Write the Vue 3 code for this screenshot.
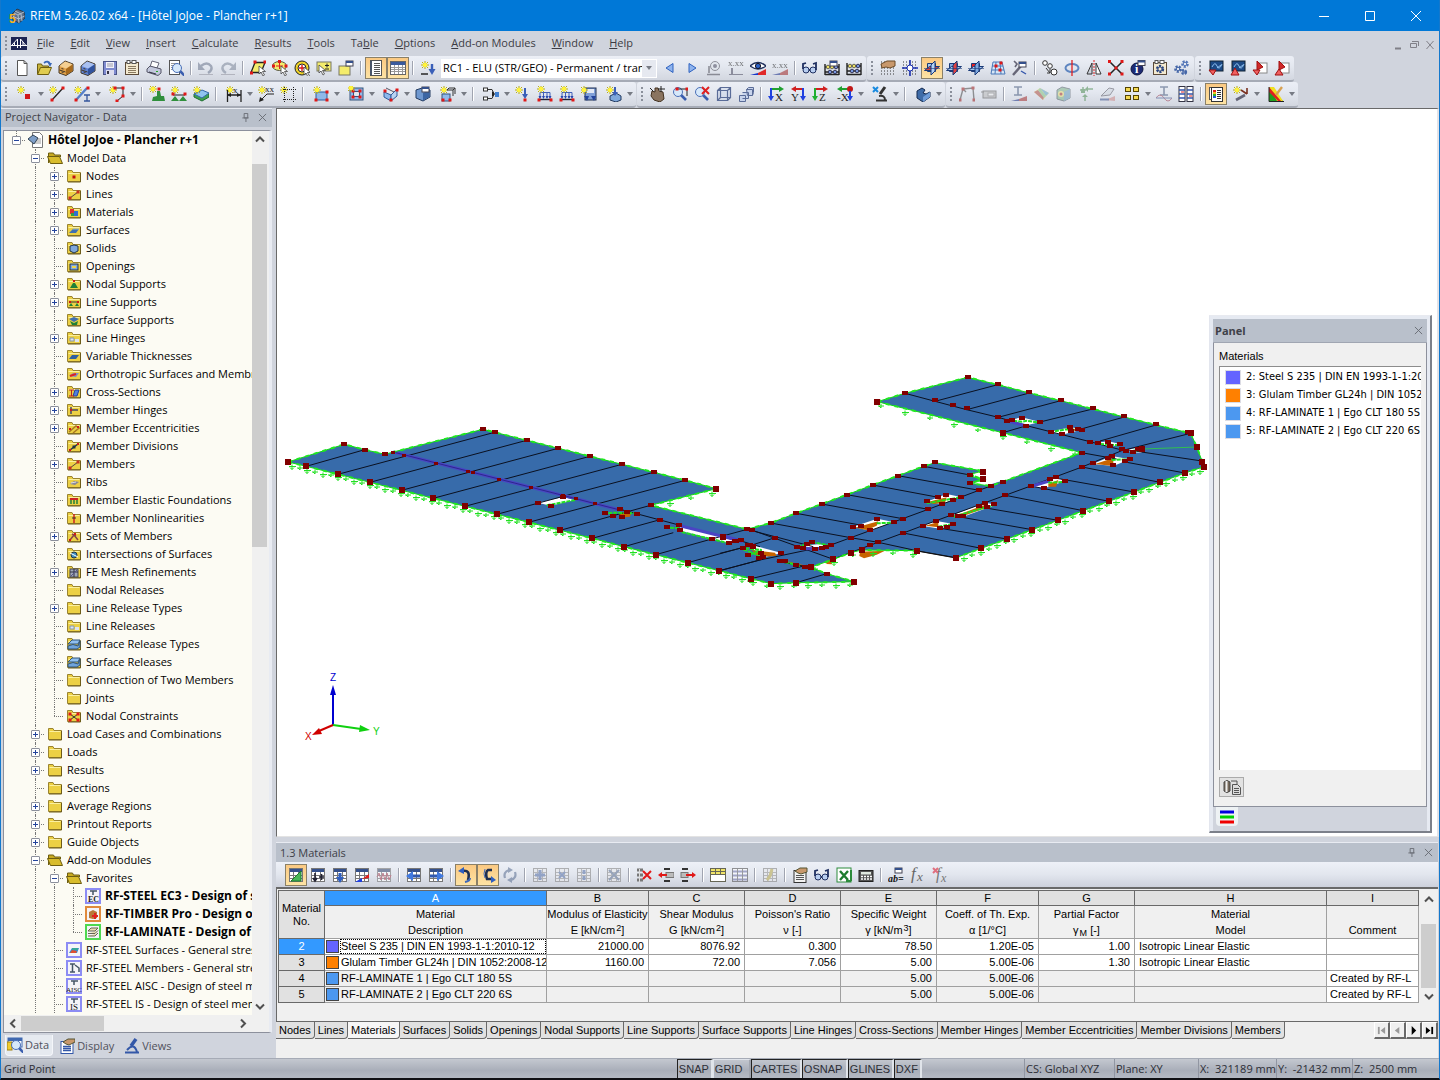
<script setup>
import { ref } from 'vue'

/* ---------- drawing helpers for 16x16 icons ---------- */
const P = (d, s = '#333', f = 'none', w = 1) => `<path d="${d}" stroke="${s}" fill="${f}" stroke-width="${w}"/>`
const F = (d, f) => `<path d="${d}" fill="${f}"/>`
const R = (x, y, w, h, f, s = 'none') => `<rect x="${x}" y="${y}" width="${w}" height="${h}" fill="${f}" stroke="${s}"/>`
const C = (x, y, r, f, s = 'none') => `<circle cx="${x}" cy="${y}" r="${r}" fill="${f}" stroke="${s}"/>`
const T = (x, y, t, size = 9, f = '#222', extra = '') => `<text x="${x}" y="${y}" font-family="Liberation Serif,serif" font-size="${size}" fill="${f}" ${extra}>${t}</text>`
const dot = (x, y, f = '#e01818') => R(x - 1.5, y - 1.5, 3, 3, f)
const star = (x, y) => P(`M${x - 4} ${y}h8M${x} ${y - 4}v8M${x - 3} ${y - 3}l6 6M${x + 3} ${y - 3}l-6 6`, '#b9ae12') + C(x, y, 2.3, '#fff33c')
const cursor = (x, y) => P(`M${x} ${y}v8l2-2 2 4 1.500-1-2-3.500h3z`, '#444', '#fff', 0.8)
const sheet = (x, y, w, h) => R(x, y, w, h, '#fff', '#555')
const grid = (s = '#777') => R(1.5, 1.5, 13, 13, '#fff', s) + R(2, 2, 12, 3, '#34508c') + P('M2 8.500h12M2 11.500h12M5.500 5v9M10.500 5v9', s)
const pale = () => R(1.5, 1.5, 13, 13, '#e8eaf0', '#888') + P('M2 5.500h12M2 8.500h12M2 11.500h12M5.500 2v12M10.500 2v12', '#999')
const lens = (x, y) => P(`M${x + 3} ${y + 3}l5 5`, '#3a5dae', 'none', 2.6) + C(x, y, 4.5, '#d6e8fa', '#4a6fb8')
const box = (a, b, c) => P('M1 6l6-5 8 3v7l-7 4.500-7-2.500z', '#443828', a) + F('M8 9l6.500-4.500v6.500L8 15z', c) + F('M1.500 6L7 1.500l7.500 2.700L8 8.500z', b) + P('M1.500 10l6 2M3.500 8.500l2 .500M3.500 12l2 .500', '#443828')
const axes = (h, v, t, hd) => P(hd > 0 ? 'M3 3h9' : 'M14 3H5', h, 'none', 2) + F(hd > 0 ? 'M11 0l5 3-5 3z' : 'M6 0L1 3l5 3z', h) + P(hd > 0 ? 'M3 2v9' : 'M13 2v9', v, 'none', 2) + F(hd > 0 ? 'M0 10h6l-3 5z' : 'M10 10h6l-3 5z', v) + T(hd > 0 ? 7 : 1, 15, t, 11)
const cross = (x, y, s, c) => P(`M${x} ${y}l${s} ${s}M${x + s} ${y}l-${s} ${s}`, c, 'none', 2)
const abacus = (y) => P(`M1 ${y}v${15 - y}M15 ${y}v${15 - y}M1 ${y + 3}h14M1 ${y + 8}h14M1 14.500h14`, '#222', 'none', 1.4) + C(4, y + 3, 1.8, '#efe060', '#665') + C(8, y + 3, 1.8, '#efe060', '#665') + C(12, y + 3, 1.8, '#7898e0', '#335') + C(6, y + 8, 1.8, '#7898e0', '#335') + C(11, y + 8, 1.8, '#7898e0', '#335')
const plane = (a, b, c) => P('M3.500 3.500h8v8h-8z', '#1a3a78', b) + P('M.500 10.500l5-4h10l-5 4z', '#1a3a78', a) + P('M7 15V5l4-4v10z', '#1a3a78', c) + P('M0 8.500h16', '#1b3a7a', 'none', 0.6)
const gear = (x, y, r, f) => `<circle cx="${x}" cy="${y}" r="${r}" fill="none" stroke="${f}" stroke-width="2.400" stroke-dasharray="2 1.200"/>` + C(x, y, r - 0.8, 'none', f)
const eye = (y) => P(`M0 ${y}q8-7 16 0q-8 6-16 0z`, '#20305c', '#fff', 1.4) + C(8, y, 2.6, '#2c62c8', '#112')
const winlet = (x, y) => R(x, y, 7, 5, '#fff', '#445') + R(x, y, 7, 2, '#34508c')
const load = P('M1 13.500h14', '#223', 'none', 1.4) + P('M3 12V6.500h10V12M6.500 12V6.500M10 12V6.500', '#4060b8') + F('M1.500 10h3l-1.500 3zM5 10h3l-1.500 3zM8.500 10h3l-1.500 3zM11.500 10h3l-1.500 3z', '#2848b0') + dot(2, 14) + dot(14, 14)
const dots = '<path d="M1 2h15M1 5h15M1 8h15M1 11h15M1 14h15" stroke="#333" stroke-width="1" stroke-dasharray="1 2"/>'
const rfx = (a) => R(2, 1, 13, 10, '#1c4a86', '#123') + P('M4 7q3-6 5-1t5-2M9 8l4-3', '#8fc0f0') + P(a, '#a01010', '#f06060')

const icons = {
  new: P('M3.500.500h6.500l3 3v12h-9.500z', '#555', '#fff') + P('M10 .500v3h3', '#555'),
  open: P('M1.500 14V4h4l1 2h6v2', '#6d5d10', '#c8b43c') + P('M1.500 14.500l3-7h11l-3 7z', '#6d5d10', '#e0cc50') + P('M8 3q4-3 6 1', '#3a68b8', 'none', 1.8) + F('M12 3h4l-2 4z', '#3a68b8'),
  boxBrown: box('#e2a24a', '#f4cf92', '#a86a1c'),
  boxBlue: box('#5f82d2', '#a9c0f0', '#31539e'),
  save: R(1.5, 1.5, 13, 13, '#7f8bd0', '#4b5488') + R(4, 2, 8, 6, '#f2f2fa') + P('M5 4h6M5 6h6', '#99a') + R(4, 10, 8, 5, '#dde') + R(5, 11, 2, 3, '#334'),
  report: R(1.5, 2.5, 13, 12, '#f4ead0', '#5b4a38') + R(3, 0.5, 3, 3, '#fff', '#555') + R(8, 0.5, 4, 3, '#fff', '#555') + P('M4 6.500h8M4 8.500h8M4 10.500h8M4 12.500h8', '#8a7a60'),
  print: P('M4 7l2-6 7 2-2 5z', '#667', '#fff') + P('M1 9l3-3 11 3v4l-3 2.500L1 12z', '#556', '#c3c8dc') + P('M3 12l7 2', '#334') + R(10, 11, 2, 1, '#2a2'),
  preview: sheet(1.5, 0.5, 10, 14) + P('M3 3.500h7M3 5.500h7M3 7.500h4M3 9.500h3', '#999') + lens(9, 8),
  undo: P('M3 6q6-5 10 0q2 4-3 7', '#6f7fa4', 'none', 2.4) + F('M0 2v8h7z', '#6f7fa4') + P('M1 14.500h14', '#99a'),
  redo: P('M13 6q-6-5-10 0q-2 4 3 7', '#7f8fac', 'none', 2.4) + F('M16 2v8H9z', '#7f8fac') + P('M1 14.500h14', '#99a'),
  selPoly: P('M5 2.500h10l-4 10H1z', '#222', '#f4ec6c', 1.3) + dot(5, 2) + dot(15, 2) + dot(1.5, 13) + cursor(9, 6),
  selLasso: `<ellipse cx="7.500" cy="6" rx="7" ry="4.500" fill="#f4ec6c" stroke="#554"/>` + dot(7.5, 1.5) + dot(1.5, 6) + dot(14, 6) + P('M7.500 3v6M4 6h7', '#d22') + cursor(9, 6),
  selRing: C(8, 8, 7, '#f0d428', '#222') + C(8, 8, 4, '#fff', '#222') + P('M8 5v6M5 8h6', '#e01818', 'none', 1.4) + cursor(10, 7),
  selPlus: R(1, 2, 14, 9, '#f4ec6c', '#776') + P('M11 3.500v4M9 5.500h4M9 9h4', '#222') + cursor(3, 5),
  selWin: R(1, 6, 11, 9, '#f4ec6c', '#776') + winlet(8, 1),
  list: sheet(2.5, 0.5, 11, 15) + R(2, 1, 2, 14, '#4a5568') + P('M6 3.500h6M6 5.500h6M6 7.500h6M6 9.500h6M6 11.500h6M6 13.500h6', '#555'),
  table: R(0.5, 1.5, 15, 13, '#fff', '#666') + R(1, 2, 14, 3, '#3a5a9c') + P('M1 7.500h14M1 9.500h14M1 11.500h14M4.500 5v9M8.500 5v9M12.500 5v9', '#999'),
  loadCase: star(5, 5) + P('M1 14h7', '#333', 'none', 1.6) + P('M12 4v7', '#3a5fb8', 'none', 2.4) + F('M8.500 9h7l-3.500 6z', '#3a5fb8'),
  prev: P('M11 3.500v9L4 8z', '#2f62c0', '#8fb4ee'),
  next: P('M5 3.500v9L12 8z', '#2f62c0', '#8fb4ee'),
  eyeDown: C(9, 6, 4.5, '#dce4f0', '#556') + C(9, 6, 2, '#557') + P('M1 14.500h13M3 6v7', '#556', 'none', 1.6),
  valDown: T(0, 6, 'x.xx', 9) + P('M4 8v6', '#557', 'none', 2) + P('M1 14.500h14', '#557'),
  eye: eye(6) + F('M0 15l8-2v2z', '#1838c8') + F('M8 15v-2l8-4v6z', '#e02828'),
  val: T(0, 8, 'x.xx', 9) + F('M0 15l8-2v2z', '#1838c8') + F('M8 15v-2l8-4v6z', '#e02828'),
  glasses: C(4, 10, 3, '#b8cef0', '#1f2f60') + C(11, 10, 3, '#b8cef0', '#1f2f60') + P('M1 9V4l3-1M14 10V3l-3 1M7 10h1', '#1f2f60', 'none', 1.8),
  calcWin: abacus(4) + winlet(6, 1),
  calc: abacus(3),
  hand: dots + P('M1 4l6-3h8v5l-5 2-4-1-4 1z', '#6a4a28', '#c8986c'),
  gridSnap: dots + C(8, 8, 3, '#fff', '#1a2fb0') + P('M8 0v5M8 11v5M0 8h5M11 8h5', '#1a2fb0', 'none', 1.6),
  plane1: plane('#e04040', '#a7c9f0', '#b5d2f4'),
  plane2: plane('#a7c9f0', '#7fa9e0', '#e04040'),
  plane3: plane('#a7c9f0', '#e82020', '#7fa9e0'),
  mesh: P('M3 2h9l3 12H1z', '#4a78b8', '#d6e6f6') + P('M2 6h11M2 10h12M6 2l-1 12M10 2l1 12', '#4a78b8') + dot(6, 6) + dot(10, 10) + dot(11, 3),
  tool: P('M1 15L9 6', '#667', 'none', 2.4) + winlet(7, 2) + P('M2 1l3 3-2 3', '#667', 'none', 1.6) + P('M9 11l5 3', '#3355aa', 'none', 1.4),
  copy: C(3, 3, 2.3, '#fff', '#333') + C(8, 6, 2.3, '#fff', '#333') + C(12, 12, 3, '#fff', '#333') + P('M4 8l4 5M8 13V9M8 13H5', '#333'),
  rotate: `<ellipse cx="8" cy="8" rx="6.500" ry="4" fill="none" stroke="#5f86c0" stroke-width="2"/>` + P('M8 0v16', '#e02020', 'none', 1.3),
  mirror: P('M6 3v11H1z', '#333', '#cfd4dd') + P('M10 3v11h5z', '#333', '#fff') + '<path d="M8 0v16" stroke="#e02020" stroke-dasharray="2 1"/>',
  crossing: P('M2 2l12 12M14 2L2 14', '#222', 'none', 1.5) + dot(1.5, 1.5) + dot(14, 1.5) + dot(1.5, 14) + dot(14, 14) + dot(8, 8),
  info: C(7, 9, 6, '#1d2b74', '#0d1540') + T(5, 13, 'i', 12, '#fff', 'font-weight="bold"') + winlet(8, 0.5),
  gearBox: R(1.5, 2.5, 13, 12, '#f4ead0', '#5b4a38') + R(3, 0.5, 3, 3, '#fff', '#555') + R(8, 0.5, 4, 3, '#fff', '#555') + gear(8, 9, 3, '#2a4580'),
  gears: gear(4, 9, 2.6, '#4466a8') + gear(11, 4, 2.6, '#5577b8') + gear(10, 12, 2, '#4466a8'),
  rf1: rfx('M1 10h7l-3 5z'), rf2: rfx('M5 8l4 7H1z'),
  pdf1: R(6, 3, 9, 10, '#fff', '#888') + P('M5 1l6 6-6 3z', '#a01010', '#d02828') + P('M1 10h7l-3 5z', '#a01010', '#f06060'),
  pdf2: R(6, 3, 9, 10, '#fff', '#888') + P('M5 1l6 6-6 3z', '#a01010', '#d02828') + P('M5 9l4 6H1z', '#a01010', '#f06060'),
  node: star(4, 4) + R(8, 8, 5, 5, '#d01818'),
  line: star(4, 4) + P('M3 14L14 2', '#222', 'none', 1.3) + dot(3, 14) + dot(14, 2),
  member: star(4, 4) + P('M2 14L13 2', '#5580c8', 'none', 2.4) + dot(2, 14) + dot(14, 2) + P('M10 9h6M13 9v6M10 15h6', '#33559c', 'none', 1.3),
  pline: star(4, 4) + P('M6 2h8v8L8 15', '#222') + dot(6, 2) + dot(14, 2) + dot(14, 10) + dot(8, 15),
  nSupport: star(4, 3) + dot(10, 3) + F('M8 5h3l1 5h3l1 5H3l1-4 4-1z', '#2f8f3c'),
  lSupport: star(4, 4) + P('M2 9h12', '#222') + dot(2, 8) + dot(14, 8) + F('M0 15l4-5 4 5zM8 15l4-5 4 5z', '#2f8f3c'),
  sSupport: P('M1 11l8 4 7-4V8l-8-3-7 3z', '#1f6f30', '#3fa050') + P('M1 8l8 4 7-5-7-3z', '#3468a8', '#8fc4f0') + star(4, 4),
  dim: star(4, 4) + P('M1 9h14M1.500 4v12M15 4v12', '#222', 'none', 1.3) + F('M1 9l4-2v4zM15 9l-4-2v4z', '#222') + T(7, 7, 'x', 9),
  note: star(4, 4) + T(7, 6, 'xx', 9) + P('M16 8H9l-7 7', '#222') + F('M1 16l1-5 4 3z', '#222'),
  region: star(4, 4) + '<path d="M3 3.500h13M3 13.500h13M4.500 1v15M13.500 1v15" stroke="#222" stroke-dasharray="1 1"/>',
  surface: P('M3 6h11v8H3z', '#2e5c9c', '#8fb8ea') + star(4, 4) + dot(14, 6) + dot(14, 14) + dot(3, 14),
  opening: R(2, 2, 13, 12, '#8fb8ea', '#34547c') + R(5.5, 5.5, 6, 5, '#e4e8f0', '#34547c') + dot(5, 5) + dot(12, 11) + dot(12, 5) + dot(5, 11) + star(3, 2),
  intersect: P('M1 6l7 3v6l-7-4z', '#2e5c9c', '#8fb8ea') + P('M8 9l6-6v7l-6 5z', '#2e5c9c', '#b9d2f2') + P('M3 2l8 4', '#556') + dot(2, 5) + dot(8, 14) + dot(14, 4),
  solid: P('M1 4l6-2 8 2v7l-7 4-7-3z', '#223a60', '#6f98d0') + F('M8 7l6.500-3v7L8 14.500z', '#3c66a4') + winlet(7, 1),
  copySolid: star(4, 4) + R(2, 8, 8, 7, '#8fb8ea', '#34547c') + P('M7 4h6v6M9 2h6v6M7 4l2-2M13 4l2-2', '#333') + dot(3, 14) + dot(10, 14),
  connect: R(0.5, 2, 4, 3, '#fff', '#333') + R(0.5, 11, 4, 3, '#fff', '#333') + P('M5 3.500h4l2 4M5 12.500h4l2-4', '#333') + F('M9 5l3 3-3 3z', '#222') + R(12, 6, 4, 5, '#3f7fd0'),
  load1: star(4, 4) + P('M10 2v8', '#3a5fb8', 'none', 2) + F('M7 8h6l-3 5z', '#3a5fb8') + dot(10, 14),
  load2: load + star(4, 3), load3: load + star(5, 3),
  load4: R(4, 2, 11, 12, '#7f9fd8', '#1f2f50') + R(6, 3, 7, 4, '#e2e8f4') + star(3, 4) + F('M3 10h5l-2 5zM10 10h5l-2 5z', '#24449c'),
  load5: star(4, 4) + P('M4 10l6-3 5 3v4l-5 2-6-2z', '#223a60', '#7fa8dc') + P('M9 1v6', '#3a5fb8', 'none', 2) + F('M6 6h6l-3 4z', '#3a5fb8'),
  pan: P('M2 5l3 1V2h3l1 3 4 1 1 7-4 3-6-2-3-4z', '#443322', '#8a7460') + P('M11 0v6M8 3h7M0 2l3 3', '#222'),
  zoomWin: lens(6, 6) + P('M5 3h10v7', '#222') + dot(5, 3) + dot(15, 3),
  zoomOff: lens(6, 6) + cross(8, 1, 7, '#e02020'),
  cube: P('M1.500 4.500h10v10h-10zM4.500 1.500h10v10h-10zM1.500 4.500l3-3M11.500 4.500l3-3M11.500 14.500l3-3M1.500 14.500l3-3', '#5a6c98', '#c8d4ec66', 1.2),
  cubes: P('M1.500 9.500h6v6h-6zM4.500 6.500h6v6h-6M8.500 3.500h6v6h-5zM8.500 3.500l2-2h5v5l-1 3', '#5a6c98', '#c8d4ec'),
  vx: axes('#20a030', '#2040e0', 'X', 1), vy: axes('#d02020', '#2040e0', 'Y', -1), vz: axes('#d02020', '#20b030', 'Z', 1),
  vmx: P('M14 3H5', '#20a030', 'none', 2) + F('M5 0L0 3l5 3z', '#20a030') + C(13, 3, 3, '#c01818') + P('M13 5v8', '#2040e0', 'none', 2) + F('M10 10h6l-3 5z', '#2040e0') + T(0, 15, '-X', 11),
  scope: cross(1, 1, 5, '#1a8be0') + P('M13 1L8 8', '#333', 'none', 3) + P('M4 14.500h11M7 10q6-1 6 4', '#333', 'none', 2),
  block: P('M2 5l5-3 3 2-2 3 3 1 4-2v5l-7 5-6-4z', '#152a50', '#3f6ca8') + F('M8 11l7-5v5l-7 5z', '#6f9cd8'),
  frame: P('M1 14L4 3l10-1 1 12M4 3l3 3', '#555', 'none', 1.4) + dot(4, 3) + dot(14, 2) + dot(1, 14) + dot(15, 14),
  module: R(2, 5, 13, 7, '#bbb', '#666') + R(7, 7, 6, 3, '#eee', '#888') + P('M0 6h3', '#666'),
  diag1: P('M3 1h8M7 1v8M3 9h8', '#46649c', 'none', 1.6) + F('M0 15l8-2v2z', '#2040c0') + F('M8 15v-2l8-3v5z', '#e03030'),
  iso: F('M1 6l6-4 9 5-6 7z', '#f4e040') + F('M1 6l9 8 1-3-6-7z', '#e05040') + F('M7 2l9 5-3 3z', '#50b0e0') + F('M5 4l2-2 6 8-2 2z', '#70d070'),
  isoBox: P('M2 4l5-3 8 2v9l-6 3-7-2z', '#567', '#6fc080') + C(6, 8, 3, '#f4e040') + C(6, 8, 1.5, '#e03030') + F('M9 6l6-3v9l-6 3z', '#58a8d8'),
  forces: F('M4 3h4v4H4z', '#3f9f48') + P('M6 1v6M3 4h6M11 3h5M8 9v6', '#3f9f48', 'none', 1.5) + F('M11 0v6l-3-3zM5 11h6l-3-3z', '#3f9f48'),
  deform: P('M2 10l8-8 5 1-4 6z', '#667', '#ccd6e6') + F('M6 14l10-4v5z', '#e88') + P('M1 13.500h9', '#3a5fb8', 'none', 2),
  squares: R(1.5, 1.5, 5, 4, '#f4d850', '#554400') + R(9.5, 1.5, 5, 4, '#f4d850', '#554400') + R(1.5, 9.5, 5, 4, '#f4d850', '#554400') + R(9.5, 9.5, 5, 4, '#f4d850', '#554400'),
  sect: P('M4 1h8M8 1v8M4 9h8', '#46649c', 'none', 1.6) + P('M0 12q4-6 8 0t8 0', '#d04060') + P('M0 12h16', '#3a5fb8'),
  split: R(1, 0.5, 6, 15, '#fff', '#334') + R(9, 0.5, 6, 15, '#fff', '#334') + P('M1 4h6M1 8h6M1 12h6M9 4h6M9 8h6M9 12h6', '#3355aa', 'none', 1.6) + P('M3 6h3M11 10h3', '#d22'),
  panel: sheet(1.5, 1.5, 9, 12) + R(3.5, 1.5, 11, 14, '#fff', '#333') + R(5, 4, 3, 2, '#e02020') + R(5, 6, 3, 2, '#f0c020') + R(5, 8, 3, 2, '#30b030') + R(5, 10, 3, 2, '#2050e0') + P('M9 4.500h4M9 6.500h4M9 8.500h4M9 10.500h4M9 12.500h4', '#333'),
  wand: star(4, 4) + P('M3 14l9-5', '#667', 'none', 2.6) + P('M8 4l6 4M14 2v6', '#7a3020', 'none', 1.6),
  palette: F('M1 1l14 14H1z', '#20a020') + F('M1 1h5l9 14h-6z', '#f0e020') + F('M1 1v5l9 9h3z', '#e02020') + P('M8 9l6-8', '#d8a050', 'none', 2.4) + P('M1 1v14.500h15', '#222'),
  tGreen: grid() + P('M3 14L13 4v10z', '#1c7a2c', '#48b858'), tPlus: grid() + P('M5 6v8M3 11l2 3 2-3M9 10h5M11.500 7v6', '#223', 'none', 1.6),
  tDown: grid() + P('M8 6v5', '#2f5fc0', 'none', 3) + F('M4 10h8l-4 6z', '#2f5fc0'), tDiag: grid() + F('M1 15l7-4v4z', '#2040e0') + F('M8 12l7-5v4z', '#e02020'),
  tWave: grid() + P('M1 10l2-4 2 7 2-7 2 7 2-7 2 7 2-5', '#e03050'),
  tLeft: grid() + P('M6 9h8', '#2f58b0', 'none', 3) + F('M0 9l7-5v10z', '#3f78e0'), tRight: grid() + P('M2 9h8', '#2f58b0', 'none', 3) + F('M16 9l-7-5v10z', '#3f78e0'),
  curveL: P('M4 4q9-2 6 9', '#1f2f50', 'none', 2.6) + F('M6 0v7L0 4z', '#2f5fc0') + P('M7 15q5-1 5-4', '#3f68b8', 'none', 2),
  curveR: P('M12 3H8q-3 2-1 9h5', '#1f2f50', 'none', 2.6) + F('M11 9v7l5-3z', '#2f5fc0') + P('M5 2q-2 5 0 9', '#3f68b8'),
  refresh: P('M3 11q-2-6 4-8M13 5q2 6-4 8', '#5878b0', 'none', 2.2) + F('M6 0v6l5-3zM10 10v6l-5-3z', '#5878b0'),
  gPlus: pale() + P('M8 3v10M3 8h10', '#4f78d0', 'none', 3), gX: pale() + cross(5, 5, 6, '#4f78d0'), gDots: pale() + P('M8 3v4M8 9v4', '#4f78d0', 'none', 3), gDel: pale() + cross(3, 3, 10, '#5878b0'),
  rowDel: P('M1 3h6M1 8h6M1 13h6', '#777', 'none', 3) + P('M3.500 2v13', '#ddd') + cross(7, 4, 8, '#e01818'),
  rowIn: R(8, 5.5, 8, 5, '#bbb', '#777') + P('M6 2h6M6 14h6', '#333', 'none', 2) + P('M3 8h6', '#e01818', 'none', 2) + F('M0 8l4-3v6z', '#e01818'),
  rowOut: R(1, 5.5, 7, 5, '#bbb', '#777') + P('M2 2h6M2 14h6', '#333', 'none', 2) + P('M6 8h6', '#e01818', 'none', 2) + F('M16 8l-4-3v6z', '#e01818'),
  sheetY: R(0.5, 1.5, 15, 13, '#fff', '#665') + R(1, 2, 14, 5, '#f0e468') + P('M1 4.500h14M1 7.500h14M5.500 2v5M10.500 2v5', '#665'),
  sheetB: R(0.5, 1.5, 15, 13, '#fff', '#555') + P('M1 4.500h14M1 8.500h14M1 12.500h14', '#7278d0', 'none', 2) + P('M5.500 2v12M10.500 2v12', '#666'),
  pick: pale() + P('M10 2l-2 7-3 4', '#c8b020', 'none', 3),
  form: R(2, 3.5, 12, 12, '#f2f2f2', '#333') + P('M4 8.500h8M4 10.500h8M4 12.500h8', '#555') + P('M3 4l5-3h7v4l-6 2-3-1z', '#553', '#c8986c'),
  excel: R(1, 1, 14, 14, '#fff', '#2c8b3c') + P('M4 4l8 9M12 4l-8 9', '#1f7c30', 'none', 2.4) + P('M10 14h5M15 3v11', '#2c8b3c', 'none', 2),
  calculator: R(1, 3.5, 14, 11, '#555', '#222') + R(3, 5, 10, 2.5, '#dfe8df') + '<path d="M3 9.500h11M3 12h11" stroke="#fff" stroke-width="1.500" stroke-dasharray="2 1"/>',
  abEq: winlet(7, 1) + T(0, 15, 'ab=', 10, '#111', 'font-style="italic" font-weight="bold"'),
  fx: T(1, 12, 'f', 17, '#666', 'font-style="italic"') + T(7, 14, 'x', 13, '#666', 'font-style="italic"'),
  fxDel: T(4, 12, 'f', 16, '#777', 'font-style="italic"') + T(9, 15, 'x', 12, '#777', 'font-style="italic"') + cross(1, 1, 5, '#e07080'),
}

/* Suffixes: * pressed, > has drop-down, ~ unavailable, | separator */
const parse = (s) => s.split(' ').map((t, id) => ({ id, sep: t === '|', name: t.replace(/[*>~]/g, ''), on: t.includes('*'), drop: t.includes('>'), off: t.includes('~') }))
const bar1a = parse('new open boxBrown boxBlue save report print preview | undo~ redo~ | selPoly selLasso selRing selPlus selWin | list* table* | loadCase')
const bar1b = parse('prev next eyeDown~ valDown~ eye val~ | glasses calcWin calc')
const bar1c = parse('hand gridSnap plane1* plane2 plane3 mesh tool | copy rotate mirror crossing info gearBox gears')
const bar1d = parse('rf1 rf2 pdf1 pdf2')
const bar2a = parse('node> line member> pline> | nSupport lSupport sSupport | dim> note region | surface> opening> intersect> solid copySolid> | connect> load1 load2 load3 load4 load5>')
const bar2b = parse('pan zoomWin zoomOff cube cubes | vx vy vz vmx> scope> | block>')
const bar2c = parse('frame~ module~ | diag1~ iso~ isoBox~ forces~ deform~ squares> sect~ split | panel* wand> palette>')
const tableBar = parse('tGreen* tPlus tDown tDiag tWave~ | tLeft tRight | curveL* curveR* refresh~ | gPlus~ gX~ gDots~ | gDel~ | rowDel rowIn rowOut | sheetY sheetB~ | pick~ | form glasses excel calculator | abEq fx fxDel')
const rows = [[{ items: bar1a, combo: true, more: bar1b }, { items: bar1c }, { items: bar1d }], [{ items: bar2a }, { items: bar2b }, { items: bar2c }]]

const menus = ['File', 'Edit', 'View', 'Insert', 'Calculate', 'Results', 'Tools', 'Table', 'Options', 'Add-on Modules', 'Window', 'Help']
  .map((m) => { const k = m === 'Table' ? 2 : 0; return [m.slice(0, k), m[k], m.slice(k + 1)] })
const loadCase = ref('rc1')

/* ---------- navigator tree ---------- */
const folder = P('M1.500 13.500v-11h4.500l1 2h7.500v9z', '#9a8430', '#ecd044') + P('M2.500 5.500h11', '#fbf0a0') + P('M14.500 5v9H2', '#6e5c18')
const openFolder = P('M1.500 13V3h5l1 2h6v2', '#6d5d10', '#c8aa20') + P('M3.500 13.500L.500 6.500h12l3 7z', '#6d5d10', '#d8bc2c')
const badge = (c, inner) => R(1, 1, 14, 14, '#f4f4f8', c).replace('/>', ' stroke-width="2"/>') + inner
const tiny = {
  dot: dot(8, 9, '#c01010'),
  line: P('M4 12l8-6', '#544') + dot(4, 12, '#c83020') + dot(12, 6, '#c83020'),
  mat: R(4, 5, 4, 5, '#e03030') + R(8, 7, 4, 5, '#2f6fd0') + R(5, 9, 3, 3, '#30a040'),
  surf: F('M3 11l4-4h6l-3 4z', '#3f6fb0') + P('M7 7h6', '#9bc'),
  solid: P('M4 6l4-1 4 1v5l-4 2-4-2z', '#234', '#7fa8dc'),
  open: R(4, 6, 8, 6, '#7fa8dc', '#234') + R(6, 8, 4, 2, '#efd548'),
  sup: R(7, 4, 2, 2, '#d01818') + F('M7 7h2l3 5H4z', '#208038'),
  lsup: P('M4 8h8', '#333') + R(3, 7, 2, 2, '#d01818') + R(11, 7, 2, 2, '#d01818') + F('M3 12l2-3 2 3zM9 12l2-3 2 3z', '#208038'),
  ssup: F('M3 7l5-2 5 2-5 3z', '#3f6fb0') + F('M4 9l4 2 4-2-1 4H6z', '#208038'),
  hinge: F('M4 8h4v3H4zM9 9h4v3H9z', '#dde4f0') + P('M4 8h4v3H4z', '#89a'),
  var: F('M3 11l3-4h7l-3 4z', '#2f5fa0'),
  orth: F('M3 10l4-3h6l-3 4z', '#7f8fc8') + P('M4 10l6-2', '#d22', 'none', 2),
  cs: P('M9 6h4l-2 6H7z', '#24449c', '#4f7fe0') + P('M3 6h5M5.500 6v6M3 12h5', '#c02020'),
  mh: P('M5 5v7M5 8h7', '#446', 'none', 1.5) + R(4, 7, 2, 2, '#d01818'),
  ecc: P('M3 12l7-6 3 2-6 5', '#a87820', 'none', 1.5) + R(3, 8, 2, 2, '#d01818') + R(11, 6, 2, 2, '#d01818'),
  div: P('M4 12l8-6', '#234', 'none', 1.5) + R(3, 11, 2, 2, '#d01818') + dot(8, 9, '#234') + R(11, 5, 2, 2, '#d01818'),
  rib: F('M4 10l4-3 5 1-4 3z', '#889') + P('M5 9l5-1', '#ddd'),
  elast: P('M4 7h8', '#c22', 'none', 2) + P('M5 8v4M8 8v4M11 8v4', '#208038', 'none', 1.5),
  non: P('M8 4v9', '#c22', 'none', 1.5) + P('M6 8h4', '#333'),
  sets: P('M4 12l4-5 4 5M6 6l4 2', '#844', 'none', 1.5) + R(3, 11, 2, 2, '#d01818') + R(8, 5, 2, 2, '#d01818'),
  inter: C(8, 9, 3, '#3f8fc0', '#234') + P('M4 7l8 4', '#fff'),
  fe: R(4, 5, 8, 8, '#a0a8b8', '#445') + P('M4 8h8M8 5v8', '#334') + P('M5 12l6-6', '#558'),
  srel: P('M2 8l4-4h8l-2 4z', '#357', '#8fc0f0') + P('M2 10q5-3 10 0l2-5v6l-3 2H2z', '#357', '#6fa4dc'),
  con: P('M4 6l8 6M12 6l-8 6', '#333') + dot(4, 6) + dot(12, 6) + dot(4, 12) + dot(12, 12),
}
const n = (d, text, exp, icon, opt = {}) => ({ d, text, exp, icon: icon in tiny ? folder + tiny[icon] : icon || folder, ...opt })
const modBlue = '#8c8cf4'
const tree = [
  n(0, 'Hôtel JoJoe - Plancher r+1', '-', P('M4.500.500h7l3 3v12h-10z', '#777', '#fff') + P('M7 7h6M7 9h6M7 11h6', '#999') + P('M0 7l5-4 5 3-4 6z', '#345', '#7f9fc8'), { bold: true }),
  n(1, 'Model Data', '-', openFolder), n(2, 'Nodes', '+', 'dot'), n(2, 'Lines', '+', 'line'), n(2, 'Materials', '+', 'mat'), n(2, 'Surfaces', '+', 'surf'),
  n(2, 'Solids', '', 'solid'), n(2, 'Openings', '', 'open'), n(2, 'Nodal Supports', '+', 'sup'), n(2, 'Line Supports', '+', 'lsup'), n(2, 'Surface Supports', '', 'ssup'),
  n(2, 'Line Hinges', '+', 'hinge'), n(2, 'Variable Thicknesses', '', 'var'), n(2, 'Orthotropic Surfaces and Membranes', '', 'orth'), n(2, 'Cross-Sections', '+', 'cs'),
  n(2, 'Member Hinges', '+', 'mh'), n(2, 'Member Eccentricities', '+', 'ecc'), n(2, 'Member Divisions', '', 'div'), n(2, 'Members', '+', 'line'), n(2, 'Ribs', '', 'rib'),
  n(2, 'Member Elastic Foundations', '', 'elast'), n(2, 'Member Nonlinearities', '', 'non'), n(2, 'Sets of Members', '+', 'sets'), n(2, 'Intersections of Surfaces', '', 'inter'),
  n(2, 'FE Mesh Refinements', '+', 'fe'), n(2, 'Nodal Releases', ''), n(2, 'Line Release Types', '+'), n(2, 'Line Releases', '', 'hinge'), n(2, 'Surface Release Types', '', 'srel'),
  n(2, 'Surface Releases', '', 'srel'), n(2, 'Connection of Two Members', ''), n(2, 'Joints', ''), n(2, 'Nodal Constraints', '', 'con', { last: true }),
  n(1, 'Load Cases and Combinations', '+'), n(1, 'Loads', '+'), n(1, 'Results', '+'), n(1, 'Sections', ''), n(1, 'Average Regions', '+'), n(1, 'Printout Reports', '+'), n(1, 'Guide Objects', '+'),
  n(1, 'Add-on Modules', '-', openFolder), n(2, 'Favorites', '-', openFolder),
  n(3, 'RF-STEEL EC3 - Design of steel members', '', badge(modBlue, P('M5 3h7M8 3v4', '#456', 'none', 1.5) + T(3, 14, 'EC', 8, '#222')), { bold: true }),
  n(3, 'RF-TIMBER Pro - Design of timber members', '', badge('#e08a3c', F('M4 6l4-2 4 2v6l-4 1-4-1z', '#b87838') + P('M10 7v6M7 10h6', '#e02020', 'none', 2)), { bold: true }),
  n(3, 'RF-LAMINATE - Design of laminate surfaces', '', badge('#4fd850', P('M3 7l3-3h7l-3 3zM3 9.500h7l3-3M3 12h7l3-3', '#665', '#e8dcb0')), { bold: true, last: true }),
  n(2, 'RF-STEEL Surfaces - General stress analysis', '', badge(modBlue, F('M3 11l3-5h7l-2 5z', '#2f8fd0') + F('M4 11l2-3 5 1-1 2z', '#e05030') + P('M6 7h6', '#40c060'))),
  n(2, 'RF-STEEL Members - General stress analysis', '', badge(modBlue, P('M4 4h5M6.500 4v8M4 12h5M9 5l4 3v4', '#456', 'none', 1.5))),
  n(2, 'RF-STEEL AISC - Design of steel members', '', badge(modBlue, P('M5 3h7M8 3v4', '#456', 'none', 1.5) + T(0, 14, 'AISC', 7, '#111'))),
  n(2, 'RF-STEEL IS - Design of steel members', '', badge(modBlue, P('M5 3h7M8 3v4', '#456', 'none', 1.5) + T(4, 14, 'IS', 9, '#111'))),
]
/* vertical guides that pass through a row, left of its own connector */
const guides = (r) => Array.from({ length: r.d }, (_, k) => k > 0)
const navTabs = [
  { text: 'Data', on: true, icon: R(1, 1, 14, 9, '#fff', '#3f68b0') + R(1, 1, 14, 3, '#3f68b0') + R(0, 5, 5, 8, '#f0cc30', '#a08010') + lens(9, 8) },
  { text: 'Display', icon: R(2, 3.5, 12, 12, '#fff', '#3458a8') + P('M4 8.500h8M4 10.500h8M4 12.500h8', '#3458a8', 'none', 1.5) + P('M4 4l5-3h7v3l-6 3-3-1z', '#553', '#c8986c') },
  { text: 'Views', icon: P('M12 1L7 8', '#3458a8', 'none', 3.5) + P('M1 14.500h14M3 12q7-8 10 2', '#3458a8', 'none', 2) },
]

const conv = (ox, oy) => (s) => s.trim().split(/\s+/).map((p) => { const [x, y] = p.split(',').map(Number); return [ox + x / 3, oy + y / 3] })
const W = conv(280, 420), E = conv(720, 360)
const str = (pts) => pts.map((p) => p.map((v) => v.toFixed(1)).join(',')).join(' ')
const westBottom = W('24,126 79,139 174,163 270,187 365,211 460,235 555,259 651,283 746,307 841,331 937,355 1032,380 1127,404 1223,428 1318,452 1413,476')
const westTop = W('193,73 254,89 315,103 340,96 609,28 644,37 740,61 835,85 930,109 1026,133 1121,157 1216,181 1309,206')
const westInner = W('1309,206 1112,256 1402,328')
const midTop = E('80,508 152,489 228,460 305,432 381,404 458,375 534,347 611,319 645,308 788,333')
const notch = E('788,333 740,346 790,358 750,370 812,378 848,365 1085,278')
const eastInner = E('1085,278 848,218 472,125')
const eastTop = E('472,125 555,100 743,52 833,74 928,99 1022,122 1118,147 1213,171 1308,195 1412,220 1430,260 1446,303 1452,320')
const eastBottom = E('1452,320 1395,339 1320,367 1243,396 1167,424 1090,452 1014,481 937,509 861,537 784,565 708,593')
const south = E('590,572 425,570 392,578 340,598 272,622')
const tip = E('272,622 320,641 403,665')
const southWest = E('403,665 228,668 153,671 93,656')
const outline = str([...westBottom.slice(0, 1), ...westTop, ...westInner, ...midTop, ...notch, ...eastInner, ...eastTop, ...eastBottom, ...south, ...tip, ...southWest, ...[...westBottom].reverse()])
const greenEdges = [[westBottom[0], ...westTop], westBottom, westInner, midTop, notch, eastInner, eastTop, eastBottom, south, tip, southWest].map(str)
const joints = [
  ...['79,139 254,89', '174,163 644,37', '270,187 740,61', '365,211 835,85', '460,235 930,109', '555,259 1026,133', '651,283 850,229 1121,157', '746,307 1216,181', '841,331 1112,256', '937,355 1140,299', '1032,380 1180,338', '1127,404 1295,357 1402,328', '1223,428 1390,382', '1318,452 1440,420', '1020,268 1200,316', '1380,362 1440,380'].map(W),
  ...['0,632 130,597', '93,656 260,616', '228,668 320,641', '95,510 340,598', '80,508 280,560', '120,600 330,556 392,533 548,476 625,448 777,391 812,378', '170,604 272,622', '340,597 474,547 550,519 608,497 692,466 856,406 932,378 1086,321 1205,272 1412,220', '152,489 392,533 474,547 590,572 708,593', '228,460 420,495', '305,432 548,476', '381,404 625,448', '458,375 650,411', '534,347 777,391', '611,319 750,345', '550,519 784,565', '660,505 861,537', '692,466 937,509', '775,440 1014,481', '856,406 1090,452', '932,378 1167,424', '1010,355 1243,396', '1086,321 1320,367', '1210,305 1395,339', '1085,278 1190,297', '1210,268 1446,303', '555,100 645,124 740,149 835,172 920,197 1110,245 1205,270', '645,124 833,74', '740,149 928,99', '835,172 1022,122', '960,186 1118,147', '1080,208 1213,171', '1140,243 1308,195', '848,218 920,197', '0,580 80,560 165,533'].map(E),
].map(str)
const holes = [W('773,248 850,231 885,240 812,257'), W('1200,320 1385,364 1348,370 1200,332'), E('320,560 300,552 245,558 300,566'), E('400,500 472,476 520,486 450,512'), E('620,425 680,402 722,411 665,432'), E('930,378 1008,350 1034,364 972,385'), E('860,182 905,172 960,186 920,196'), E('990,215 1050,202 1090,208 1026,224'), E('1130,248 1165,244 1200,252 1170,262'), E('1118,312 1175,288 1230,298 1180,318'), E('690,468 795,428 828,434 730,470'), E('605,497 650,483 700,492 660,506'), E('85,556 100,556 185,579 130,592'), E('1215,270 1265,262 1265,278 1240,277')].map(str)
const timber = [W('1020,278 1055,276 1050,290 1020,293'), E('95,570 165,578 170,588 115,590'), E('420,575 495,572 470,584 432,595 418,588'), E('405,503 475,484 470,497 440,510'), E('625,425 680,412 675,428 640,432'), E('1125,312 1180,294 1180,318'), E('705,468 790,436 800,443 730,468'), E('615,497 655,486 655,502'), E('985,372 1015,360 1008,380 985,380'), E('1045,205 1075,208 1045,220'), E('315,603 340,600 335,613 320,612'), E('195,602 250,615 245,620')].map(str)
const steel = [W('340,96 1020,270'), W('1200,317 1380,362'), E('0,524 68,545'), E('940,377 990,362'), E('812,378 848,367'), E('865,183 912,196'), E('245,566 320,566')].map(str)
const greens = [W('970,282 1000,278 1075,280'), W('1155,322 1200,325'), W('1390,388 1440,408'), W('800,256 885,240'), W('1205,336 1340,368'), E('232,560 285,548 325,556'), E('75,565 125,570 85,585'), E('470,490 520,488'), E('620,430 720,412'), E('655,500 700,492'), E('985,368 1030,366'), E('880,182 905,185 920,182 960,188'), E('990,216 1040,208 1085,210'), E('1140,252 1200,256'), E('1175,300 1225,298'), E('1240,272 1265,270'), E('700,470 820,436'), E('180,602 240,618'), E('750,345 790,358 750,370')].map(str)
const big = [...westBottom, ...W('1309,206 1328,350'), ...E('788,335 788,358 472,125 848,218 1265,268 1412,220 1430,260 1446,305'), ...eastBottom, ...E('590,572 425,570 392,578 340,598 272,622 403,665 228,668 153,671')]
const small = [
  ...W('193,73 254,89 315,103 609,26 644,35 740,59 835,83 930,107 1026,131 1121,155 1216,179 1112,256 1402,328 1415,330 773,248 812,257 850,232 1020,268 1040,275 1070,281 975,280 1000,287 1025,292 1140,299 1160,322 1198,314 1200,331 1295,356 1348,369 1365,364 1383,359 1390,384 1410,376 1405,406 1420,380'),
  ...E('80,508 95,510 10,528 28,548 63,540 48,544 165,533 85,556 100,558 85,584 122,580 130,592 118,594 184,579 180,603 195,602 228,616 255,622 232,560 250,563 262,553 275,546 285,566 305,565 318,560 332,555 392,533 450,555 474,547 450,511 400,502 422,497 472,478 522,486 548,476 152,489 228,460 305,432 381,404 458,375 534,347 611,319 645,306 750,346 750,368 777,391 812,378 848,365 625,448 620,424 655,412 678,404 700,419 722,411 665,431 608,497 649,484 698,492 660,505 680,500 550,519 692,466 715,468 730,467 778,437 795,429 822,433 800,440 856,406 932,378 972,385 990,356 1008,350 1034,364 1086,321 1118,310 1165,293 1176,287 1180,314 1215,302 1230,297 1205,268 1218,272 1240,276 1255,266 1085,278 1110,245 1133,250 1165,245 1200,252 1170,258 1050,201 1052,212 1075,207 1087,209 1026,223 992,215 960,186 906,173 876,181 862,183 918,198 835,170 740,145 700,135 645,121 555,99 743,50 833,72 928,97 1022,120 1118,145 1213,169 1308,193 1403,217 320,641'),
]
const beamNodes = W('340,96 373,105 468,129 563,153 579,157 658,177 754,201 849,226 887,235 944,250')
const supports = []
for (const [edge, step] of [[westBottom, 8], [eastBottom, 9], [southWest, 14], [[...eastInner].reverse(), 25], [south, 20], [westInner.slice(0, 2), 22]]) {
  let rest = 4
  for (let i = 1; i < edge.length; i++) {
    const [x0, y0] = edge[i - 1], [x1, y1] = edge[i], len = Math.hypot(x1 - x0, y1 - y0)
    for (; rest < len; rest += step) supports.push([x0 + (x1 - x0) * rest / len, y0 + (y1 - y0) * rest / len + 3])
    rest -= len
  }
}
const marks = supports.map(([x, y], i) => `M${Math.round(x)} ${Math.round(y)}` + (i % 2 ? 'm-3 0h6m-3-2v4m-2-2l2 2' : 'm-3 .5h7m-4-2v5m-2-2l2 2l2-2')).join('')

/* ---------- materials ---------- */
const legend = [['2: Steel S 235 | DIN EN 1993-1-1:2010-12', '#6464ff'], ['3: Glulam Timber GL24h | DIN 1052:2008-12', '#ff8000'], ['4: RF-LAMINATE 1 | Ego CLT 180 5S', '#4c98f0'], ['5: RF-LAMINATE 2 | Ego CLT 220 6S', '#4c98f0']]
const cols = [
  { k: 'A', w: 222, a: 'Material', b: 'Description' }, { k: 'B', w: 102, a: 'Modulus of Elasticity', b: 'E [kN/cm', sup: '2', c: ']' },
  { k: 'C', w: 96, a: 'Shear Modulus', b: 'G [kN/cm', sup: '2', c: ']' }, { k: 'D', w: 96, a: "Poisson's Ratio", b: 'ν [-]' },
  { k: 'E', w: 96, a: 'Specific Weight', b: 'γ [kN/m', sup: '3', c: ']' }, { k: 'F', w: 102, a: 'Coeff. of Th. Exp.', b: 'α [1/°C]' },
  { k: 'G', w: 96, a: 'Partial Factor', b: 'γ', sub: 'M', c: ' [-]' }, { k: 'H', w: 192, a: 'Material', b: 'Model' }, { k: 'I', w: 92, a: '', b: 'Comment' },
]
const data = [
  { no: 2, color: '#6464ff', on: true, v: ['Steel S 235 | DIN EN 1993-1-1:2010-12', '21000.00', '8076.92', '0.300', '78.50', '1.20E-05', '1.00', 'Isotropic Linear Elastic', ''] },
  { no: 3, color: '#ff8000', v: ['Glulam Timber GL24h | DIN 1052:2008-12', '1160.00', '72.00', '7.056', '5.00', '5.00E-06', '1.30', 'Isotropic Linear Elastic', ''] },
  { no: 4, color: '#4c98f0', lock: true, v: ['RF-LAMINATE 1 | Ego CLT 180 5S', '', '', '', '5.00', '5.00E-06', '', '', 'Created by RF-L'] },
  { no: 5, color: '#4c98f0', lock: true, v: ['RF-LAMINATE 2 | Ego CLT 220 6S', '', '', '', '5.00', '5.00E-06', '', '', 'Created by RF-L'] },
]
const sheets = ['Nodes', 'Lines', 'Materials', 'Surfaces', 'Solids', 'Openings', 'Nodal Supports', 'Line Supports', 'Surface Supports', 'Line Hinges', 'Cross-Sections', 'Member Hinges', 'Member Eccentricities', 'Member Divisions', 'Members']
const modes = [['SNAP', 36], ['GRID', 38, true], ['CARTES', 51], ['OSNAP', 46], ['GLINES', 46], ['DXF', 28]]
const coords = [['CS: Global XYZ', 90], ['Plane: XY', 84], ['X:  321189 mm', 78], ['Y:  -21432 mm', 76], ['Z:  2500 mm', 87]]
</script>

<template>
  <div class="window">
    <header class="title">
      <svg class="logo" viewBox="0 0 16 16"><path d="M3 6l5-5 7 3 1 6-6 5-6-3z" fill="#5d6f86" stroke="#2c3a4c" /><path d="M5 5l4 2 6-3M9 7l1 8M6 3l6 3 1 7M3.500 8l6 3 6-3" stroke="#aebccc" fill="none" /><text x="0" y="15" font-family="Liberation Sans,sans-serif" font-size="12" font-weight="bold" fill="#f4b41c">5</text></svg>
      <h1>RFEM 5.26.02 x64 - [Hôtel JoJoe - Plancher r+1]</h1>
      <div class="winctl">
        <button aria-label="Minimize"><svg viewBox="0 0 10 10"><path d="M0 5.500h10" /></svg></button>
        <button aria-label="Maximize"><svg viewBox="0 0 10 10"><path d="M.500.500h9v9h-9z" /></svg></button>
        <button aria-label="Close"><svg viewBox="0 0 10 10"><path d="M0 0l10 10M10 0L0 10" /></svg></button>
      </div>
    </header>

    <nav class="menu">
      <i class="grip" />
      <svg class="bridge" viewBox="0 0 16 13"><path d="M0 0h16v13H0z" fill="#1c2352" /><path d="M0 8.500h16M6.500 2v9M9.500 2v9M6.500 2L1 8M9.500 2l5 6M3.500 5.500v3M12 5v3" stroke="#fff" fill="none" /></svg>
      <ul>
        <li v-for="m in menus" :key="m.join('')"><a href="#">{{ m[0] }}<u>{{ m[1] }}</u>{{ m[2] }}</a></li>
      </ul>
      <div class="mdi">
        <button aria-label="Minimize document"><svg viewBox="0 0 10 10"><path d="M2 8.500h6" stroke-width="2" /></svg></button>
        <button aria-label="Restore document"><svg viewBox="0 0 10 10"><path d="M1.500 3.500h6v4h-6zM3 1.500h6.500v4.500" /></svg></button>
        <button aria-label="Close document"><svg viewBox="0 0 10 10"><path d="M1.500 1l7 8M8.500 1l-7 8" /></svg></button>
      </div>
    </nav>

    <div v-for="(row, ri) in rows" :key="ri" class="bars">
      <div v-for="(seg, si) in row" :key="si" class="bar" role="toolbar">
        <i class="grip" />
        <template v-for="b in seg.items" :key="b.id">
          <i v-if="b.sep" class="sep" />
          <button v-else class="tool" :class="{ on: b.on, off: b.off, drop: b.drop }" :aria-label="b.name"><svg viewBox="0 0 16 16" v-html="icons[b.name]" /><b v-if="b.drop" /></button>
        </template>
        <template v-if="seg.combo">
          <div class="combo">
            <select v-model="loadCase" aria-label="Load case"><option value="rc1">RC1 - ELU (STR/GEO) - Permanent / transitoire - Eq. 6.10</option></select>
            <span><b /></span>
          </div>
          <template v-for="b in seg.more" :key="b.id">
            <i v-if="b.sep" class="sep" />
            <button v-else class="tool" :class="{ off: b.off }" :aria-label="b.name"><svg viewBox="0 0 16 16" v-html="icons[b.name]" /></button>
          </template>
        </template>
      </div>
    </div>

    <div class="body">
      <aside class="navigator">
        <header class="cap">
          <h2>Project Navigator - Data</h2>
          <button aria-label="Pin"><svg viewBox="0 0 10 10"><path d="M3.500.500h4v5h-4zM1.500 5.500h7M5.500 6v4" /></svg></button>
          <button aria-label="Close"><svg viewBox="0 0 10 10"><path d="M1 1l8 8M9 1L1 9" /></svg></button>
        </header>
        <div class="treebox">
          <div class="treerow">
            <ul class="tree" role="tree">
              <li v-for="r in tree" :key="r.text" :class="{ bold: r.bold }" role="treeitem">
                <i v-for="(g, gi) in guides(r)" :key="gi" class="cell" :class="{ pass: g }" />
                <span class="cell link" :class="{ last: r.last, root: r.d === 0 }">
                  <button v-if="r.exp" class="exp" :aria-label="(r.exp === '+' ? 'Expand ' : 'Collapse ') + r.text"><svg viewBox="0 0 7 7"><path :d="r.exp === '+' ? 'M1 3.500h5M3.500 1v5' : 'M1 3.500h5'" stroke="#24449c" /></svg></button>
                </span>
                <svg class="ticon" viewBox="0 0 16 16" v-html="r.icon" />
                <span class="ttext">{{ r.text }}</span>
              </li>
            </ul>
            <div class="vscroll">
              <svg viewBox="0 0 16 16"><path d="M4 10l4-4 4 4" /></svg>
              <div class="track"><div class="thumb" /></div>
              <svg viewBox="0 0 16 16"><path d="M4 6l4 4 4-4" /></svg>
            </div>
          </div>
          <div class="hscroll">
            <svg viewBox="0 0 16 16"><path d="M10 4L6 8l4 4" /></svg>
            <div class="track"><div class="thumb" /></div>
            <svg viewBox="0 0 16 16"><path d="M6 4l4 4-4 4" /></svg>
          </div>
        </div>
        <div class="navtabs" role="tablist">
          <button v-for="t in navTabs" :key="t.text" role="tab" :class="{ on: t.on }"><svg viewBox="0 0 16 16" v-html="t.icon" />{{ t.text }}</button>
        </div>
      </aside>

      <main class="work">
        <section class="viewport">
          <svg class="scene" viewBox="277 109 1160 728" width="1160" height="728">
            <polygon :points="outline" fill="#376baa" />
            <polygon v-for="h in holes" :key="h" :points="h" fill="#fff" />
            <polygon v-for="h in timber" :key="h" :points="h" fill="#c86400" />
            <polyline v-for="l in joints" :key="l" :points="l" fill="none" stroke="#0a1020" />
            <polyline v-for="l in steel" :key="l" :points="l" fill="none" stroke="#4a44c4" stroke-width="3" />
            <polyline :points="steel[0]" fill="none" stroke="#2c288c" />
            <path :d="marks" stroke="#22e022" fill="none" />
            <polyline v-for="l in greenEdges" :key="l" :points="l" fill="none" stroke="#10e010" stroke-width="1" />
            <polyline v-for="l in greenEdges" :key="'d' + l" :points="l" fill="none" stroke="#20e820" stroke-width="2" stroke-dasharray="4 5" />
            <polyline v-for="l in greens" :key="l" :points="l" fill="none" stroke="#20e020" stroke-width="2" stroke-dasharray="4 1" />
            <path d="M1142 449l55-2" stroke="#30c050" />
            <line x1="917" y1="551" x2="956" y2="558" stroke="#101010" />
            <rect v-for="(p, i) in big" :key="'b' + i" :x="Math.round(p[0]) - 3" :y="Math.round(p[1]) - 3" width="6" height="6" fill="#800000" />
            <rect v-for="(p, i) in small" :key="'s' + i" :x="Math.round(p[0]) - 3" :y="Math.round(p[1]) - 2" width="6" height="4" fill="#800000" />
            <rect v-for="(p, i) in beamNodes" :key="'n' + i" :x="Math.round(p[0]) - 2" :y="Math.round(p[1]) - 1" width="4" height="3" fill="#800000" />
            <g fill="none" stroke-width="2">
              <path d="M333 725v-32" stroke="#0000d0" /><path d="M330 695l3-10 3 10z" fill="#0000d0" stroke="none" />
              <path d="M333 725l28 4" stroke="#10d010" /><path d="M360 725l10 5-11 2z" fill="#10d010" stroke="none" />
              <path d="M333 725l-14 6" stroke="#d00000" /><path d="M319 728l-7 7 10-1z" fill="#d00000" stroke="none" />
            </g>
            <g font-family="Liberation Sans, sans-serif" font-size="10"><text x="330" y="681" fill="#0000d0">Z</text><text x="373" y="735" fill="#10d010">Y</text><text x="305" y="740" fill="#d00000">X</text></g>
          </svg>

          <aside class="panel">
            <header class="cap"><h2>Panel</h2><button aria-label="Close panel"><svg viewBox="0 0 10 10"><path d="M1 1l8 8M9 1L1 9" /></svg></button></header>
            <div class="pbody">
              <h3>Materials</h3>
              <ul><li v-for="l in legend" :key="l[0]"><i :style="{ background: l[1] }" /><span>{{ l[0] }}</span></li></ul>
              <button class="lib" aria-label="Material library"><svg viewBox="0 0 18 16"><path d="M1 3q3-3 6 0v9q-3 3-6 0z" fill="#776a5c" stroke="#444" /><path d="M3.500 2v11" stroke="#eee" stroke-width="2" /><path d="M8 2h6v3M9.500 5.500h5l3 3v7h-8z" fill="#ddd" stroke="#555" /><path d="M11 9.500h5M11 11.500h5M11 13.500h5" stroke="#555" /></svg></button>
            </div>
            <div class="ptabs"><button aria-label="Colour legend"><svg viewBox="0 0 14 14"><path d="M0 2h14" stroke="#0000e0" stroke-width="3" /><path d="M0 7h14" stroke="#00d000" stroke-width="3" /><path d="M0 12h14" stroke="#f00000" stroke-width="3" /></svg></button></div>
          </aside>
        </section>

        <section class="dock">
          <header class="cap">
            <h2>1.3 Materials</h2>
            <button aria-label="Pin"><svg viewBox="0 0 10 10"><path d="M3.500.500h4v5h-4zM1.500 5.500h7M5.500 6v4" /></svg></button>
            <button aria-label="Close"><svg viewBox="0 0 10 10"><path d="M1 1l8 8M9 1L1 9" /></svg></button>
          </header>
          <div class="tbar" role="toolbar">
            <template v-for="b in tableBar" :key="b.id">
              <i v-if="b.sep" class="sep" />
              <button v-else class="tool" :class="{ on: b.on, off: b.off }" :aria-label="b.name"><svg viewBox="0 0 16 16" v-html="icons[b.name]" /></button>
            </template>
          </div>
          <div class="gridbox">
            <table>
              <colgroup><col style="width: 46px"><col v-for="c in cols" :key="c.k" :style="{ width: c.w + 'px' }"></colgroup>
              <thead>
                <tr class="letters"><th rowspan="2" class="corner">Material<br>No.</th><th v-for="c in cols" :key="c.k" :class="{ on: c.k === 'A' }">{{ c.k }}</th></tr>
                <tr class="heads"><th v-for="c in cols" :key="c.k"><span>{{ c.a }}</span><span>{{ c.b }}<sup v-if="c.sup">{{ c.sup }}</sup><sub v-if="c.sub">{{ c.sub }}</sub>{{ c.c }}</span></th></tr>
              </thead>
              <tbody>
                <tr v-for="r in data" :key="r.no" :class="{ lock: r.lock, on: r.on }">
                  <th>{{ r.no }}</th>
                  <td v-for="(v, i) in r.v" :key="i" :class="{ num: i > 0 && i < 7, first: i === 0, free: i === 8 }"><div v-if="i === 0"><i :style="{ background: r.color }" /><span>{{ v }}</span></div><template v-else>{{ v }}</template></td>
                </tr>
              </tbody>
            </table>
            <div class="vscroll">
              <svg viewBox="0 0 16 16"><path d="M4 10l4-4 4 4" /></svg>
              <div class="track"><div class="thumb" /></div>
              <svg viewBox="0 0 16 16"><path d="M4 6l4 4 4-4" /></svg>
            </div>
          </div>
          <div class="sheets">
            <div class="tabs" role="tablist"><button v-for="s in sheets" :key="s" role="tab" :class="{ on: s === 'Materials' }">{{ s }}</button></div>
            <div class="pager">
              <button aria-label="First"><svg viewBox="0 0 10 10"><path d="M2 1v8" stroke="#999" stroke-width="2" /><path d="M9 1v8L4 5z" fill="#999" /></svg></button>
              <button aria-label="Previous"><svg viewBox="0 0 10 10"><path d="M7 1v8L2 5z" fill="#999" /></svg></button>
              <button aria-label="Next"><svg viewBox="0 0 10 10"><path d="M3 0v10l5-5z" /></svg></button>
              <button aria-label="Last"><svg viewBox="0 0 10 10"><path d="M8 1v8" stroke="#000" stroke-width="2" /><path d="M1 1v8l5-4z" /></svg></button>
            </div>
          </div>
        </section>
      </main>
    </div>

    <footer class="status">
      <span class="hint">Grid Point</span>
      <button v-for="m in modes" :key="m[0]" :class="{ up: m[2] }" :style="{ width: m[1] + 'px' }">{{ m[0] }}</button>
      <div class="coords"><span v-for="c in coords" :key="c[0]" :style="{ width: c[1] + 'px' }">{{ c[0] }}</span></div>
    </footer>
  </div>
</template>

<style>
html, body { margin: 0; background: #0078d7; }
</style>

<style scoped>
.window { --ui: "Open Sans", "Noto Sans", sans-serif; --grid: "Liberation Sans", Arial, sans-serif; --face: #d0d4dd; display: flex; flex-direction: column; min-height: 100vh; box-sizing: border-box; border: solid #1478cc; border-width: 0 1px; border-bottom: 2px solid #101014; background: var(--face); font: 11px/16px var(--ui); color: #000; }
* { box-sizing: border-box; }
button, select { font: inherit; color: inherit; border: 0; padding: 0; margin: 0; background: none; border-radius: 0; }
ul { list-style: none; margin: 0; padding: 0; }
h1, h2, h3 { margin: 0; font: inherit; }
i { font-style: normal; display: block; }
svg { display: block; flex: none; }

.title { display: flex; align-items: center; height: 31px; background: #0078d7; color: #fff; padding-left: 8px; font-size: 12px; }
.logo { width: 16px; height: 16px; }
.title h1 { flex: 1; padding-left: 5px; }
.winctl { display: flex; }
.winctl button { width: 46px; height: 30px; display: grid; place-items: center; }
.winctl svg { width: 10px; height: 10px; fill: none; stroke: #fff; }

.menu { display: flex; align-items: center; height: 25px; padding-bottom: 1px; color: #3c3c44; }
.menu ul { display: flex; flex: 1; padding-left: 2px; }
.menu a { display: block; padding: 0 8px; color: inherit; text-decoration: none; }
.bridge { width: 16px; height: 13px; }
.grip { width: 10px; height: 15px; background: radial-gradient(circle at 1px 1px, #8a8f9a 1px, transparent 1px) 4px 0 / 8px 4px repeat-y; flex: none; }
.mdi { display: flex; padding-right: 1px; align-self: flex-end; }
.mdi button { width: 16px; height: 20px; display: grid; place-items: center; }
.mdi svg { width: 10px; height: 10px; stroke: #808088; fill: none; }

.bars { display: flex; gap: 1px; height: 26px; }
.bar { display: flex; align-items: center; height: 26px; border-bottom: 2px solid #a6abb6; border-radius: 3px; background: linear-gradient(#eceff6, #e4e8f0 40%, #d3d7e0); padding-right: 1px; }
.tool { display: flex; align-items: center; justify-content: center; width: 22px; height: 22px; flex: none; }
.tool svg { width: 16px; height: 16px; }
.tool.on { border: 1px solid #8a8068; background: linear-gradient(#fbc982, #fde3a4); }
.tool.off svg { opacity: .6; filter: saturate(.6); }
.tool.drop { width: 35px; justify-content: flex-start; padding-left: 6px; }
b { font-weight: 700; }
.tool b, .combo b { border: solid transparent; border-width: 4px 3px 0; border-top-color: #777b84; margin-left: 5px; }
.sep { width: 2px; height: 14px; margin: 0 3px; border-left: 1px solid #a0a4b0; border-right: 1px solid #fff; flex: none; }
.combo { display: flex; align-items: center; width: 216px; height: 19px; margin: 0 2px; background: #fff; }
.combo select { flex: 1; min-width: 0; height: 17px; appearance: none; padding-left: 2px; overflow: hidden; background: #fff; }
.combo span { width: 14px; height: 17px; margin-right: 1px; background: #e6e9f0; display: grid; place-items: center; }
.combo b { margin: 0; }

.body { display: flex; flex: 1; min-height: 0; }
.navigator { width: 275px; flex: none; display: flex; flex-direction: column; }
.cap { display: flex; align-items: center; background: #b9c0cb; color: #3e4048; }
.cap h2 { flex: 1; }
.cap button { width: 17px; height: 16px; display: grid; place-items: center; }
.cap svg { width: 9px; height: 9px; stroke: #666a72; fill: none; }
.navigator .cap { height: 19px; margin-right: 4px; padding: 0 1px 2px 4px; border-top: 1px solid #e8ebf2; }
.treebox { display: flex; flex-direction: column; flex: 1; min-height: 0; margin: 3px 4px 0 2px; border: 1px solid #8c909c; border-right: 3px solid #e8ebf2; background: #f0f0f0; }
.treerow { display: flex; flex: 1 1 0; min-height: 0; overflow: hidden; }
.tree { flex: 1; min-width: 0; overflow: hidden; background: #fcfbf3; padding-left: 3px; }
.tree li { display: flex; height: 18px; align-items: center; white-space: nowrap; }
.cell { width: 19px; height: 18px; flex: none; position: relative; }
.pass::before, .link::before { content: ""; position: absolute; left: 9px; top: 0; height: 18px; border-left: 1px dotted #777; }
.link::after { content: ""; position: absolute; left: 9px; right: 1px; top: 9px; border-top: 1px dotted #777; }
.link.last::before { height: 9px; }
.link.root::before { height: 5px; }
.exp { position: absolute; z-index: 1; left: 5px; top: 5px; width: 9px; height: 9px; border: 1px solid #8c909c; background: #fff; border-radius: 1px; }
.exp svg { width: 7px; height: 7px; }
.ticon { width: 16px; height: 16px; margin: 0 4px 0 2px; }
.bold { font-weight: 700; font-size: 12px; }

.vscroll { width: 17px; display: flex; flex-direction: column; background: #f0f0f0; flex: none; }
.vscroll svg, .hscroll svg { width: 16px; height: 17px; fill: none; stroke: #505050; stroke-width: 2; }
.track { flex: 1; }
.thumb { background: #cdcdcd; }
.navigator .vscroll .thumb { height: 45%; margin-top: 16px; width: 15px; }
.hscroll { display: flex; height: 17px; background: #f0f0f0; padding: 0 18px 0 1px; }
.hscroll .thumb { width: 83px; height: 15px; margin-top: 1px; }
.navtabs { display: flex; gap: 5px; height: 25px; padding: 2px 4px; color: #50525c; }
.navtabs button { display: flex; align-items: center; gap: 2px; padding: 0 4px 0 1px; }
.navtabs svg { width: 16px; height: 16px; }
.navtabs .on { border: 1px solid #f4f6fa; border-top: 0; border-radius: 0 0 4px 4px; background: #e6eaf0; padding: 0 3px 0 1px; }

.work { flex: 1; min-width: 0; display: flex; flex-direction: column; }
.viewport { position: relative; flex: 1 1 0; min-height: 560px; overflow: hidden; background: #fff; border: 1px solid #696969; border-right: 2px solid #e3e3e8; border-bottom-color: #e3e3e3; }
.scene { position: absolute; left: 0; top: 0; }
.panel { position: absolute; right: 5px; bottom: 3px; width: 223px; height: 518px; display: flex; flex-direction: column; border: solid; border-width: 1px 2px 2px 1px; border-color: #e8eaf0 #7c808a #7c808a #e3e6ee; background: #e6eaf2; padding: 3px 3px 0; }
.panel .cap { height: 24px; padding: 0 0 0 2px; font-weight: 700; border-bottom: 1px solid #a0a6b2; }
.pbody { flex: 1; display: flex; flex-direction: column; background: #f0f0f0; border: solid #8c909c; border-width: 0 1px 1px; padding: 6px 5px 9px; }
.pbody h3 { font: 11px/15px var(--grid); height: 17px; }
.pbody ul { flex: 1; background: #fff; border: solid #8c8c8c; border-width: 1px 0 0 1px; padding-top: 1px; overflow: hidden; }
.pbody li { display: flex; align-items: center; height: 18px; gap: 5px; padding-left: 5px; font: 11px/16px "DejaVu Sans Condensed", "Noto Sans", sans-serif; white-space: nowrap; }
.pbody li i { width: 16px; height: 15px; border: 1px solid #dcdce4; flex: none; }
.lib { width: 25px; height: 20px; margin-top: 7px; border: 1px solid #aaa; background: #e2e2e2; display: grid; place-items: center; }
.lib svg { width: 18px; height: 16px; }
.ptabs { height: 24px; background: var(--face); padding-left: 3px; }
.ptabs button { width: 22px; height: 19px; background: #eef2f4; border-radius: 0 0 4px 4px; display: grid; place-items: center; }
.ptabs svg { width: 14px; height: 14px; }

.dock { display: flex; flex-direction: column; margin-top: 5px; background: #f0f0f0; height: 216px; flex: none; margin-right: 1px; }
.dock .cap { height: 20px; padding: 0 1px 0 4px; border-top: 1px solid #e8ebf2; }
.tbar { display: flex; align-items: center; height: 25px; padding-left: 9px; background: linear-gradient(#eef1f8, #e2e6ee 50%, #cdd1dc); }
.gridbox { display: flex; height: 134px; border-top: 2px solid #696969; border-left: 1px solid #696969; padding: 1px 0 0 1px; font: 11px/16px var(--grid); }
table { border-collapse: collapse; table-layout: fixed; width: 1140px; flex: none; height: 112px; align-self: flex-start; margin-right: auto; }
th { font-weight: 400; padding: 0; }
.letters { height: 15px; line-height: 13px; }
.letters th { background: #e1e1e1; border: 1px solid #696969; }
.letters th.on { background: #3399ff; color: #fff; }
.letters th.corner { line-height: 13px; }
.heads { height: 32px; }
.heads th { border: 1px solid #a0a0a0; background: #f0f0f0; }
.heads span { display: block; line-height: 16px; height: 16px; white-space: nowrap; }
sup, sub { font-size: 9px; line-height: 0; padding-left: 1px; }
sup { vertical-align: 3px; }
sub { vertical-align: -2px; }
tbody tr { height: 16px; background: #fff; }
td { border: 1px solid #a0a0a0; padding: 0 4px; line-height: 15px; white-space: nowrap; overflow: hidden; }
tbody th { border: 1px solid #696969; background: #e1e1e1; line-height: 15px; }
tr.on th { background: #3399ff; color: #fff; }
.lock td { background: #f0f0f0; }
.lock td.free { background: #fff; padding: 0 3px; }
.num { text-align: right; }
td.first { padding: 0; }
td div { display: flex; height: 15px; }
td i { width: 13px; margin: 1px; border: 1px solid #444; flex: none; }
td span { flex: 1; padding-left: 1px; }
.on td.first span { outline: 1px dotted #000; outline-offset: -1px; }
.gridbox .vscroll { padding: 1px 0 16px; }
.gridbox .thumb { margin-top: 16px; width: 15px; height: calc(100% - 16px); }
.sheets { display: flex; justify-content: space-between; height: 18px; border-top: 1px solid #696969; font: 11px/16px var(--grid); }
.tabs { display: flex; min-width: 0; overflow: hidden; }
.tabs button { padding: 0 3px; height: 17px; background: #e1e1e1; border: solid #696969; border-width: 0 1px 1px 0; border-radius: 0 0 4px 0; white-space: nowrap; }
.tabs .on { background: #f6f6f6; }
.pager { display: flex; }
.pager button { width: 16px; height: 17px; display: grid; place-items: center; border: solid; border-width: 1px 2px 2px 1px; border-color: #fff #696969 #696969 #fff; background: #f0f0f0; }
.pager svg { width: 9px; height: 9px; }

.status { display: flex; height: 20px; border-top: 1px solid #a6abb6; background: linear-gradient(#c4c8d0, #a9aeb9 60%, #b4b9c3); color: #2c2e36; line-height: 20px; }
.hint { flex: 0 0 47%; padding-left: 3px; }
.status button { font: 11px/16px var(--grid); text-align: left; padding-left: 1px; border: solid; border-width: 1px 2px 0 1px; border-color: #222 #e0e4ea #222 #222; flex: none; white-space: nowrap; }
.status .up { border-color: #dfe3ea #a0a4ae #dfe3ea #dfe3ea; }
.coords { display: flex; margin-left: auto; }
.coords span { border-left: 1px solid #9196a2; padding-left: 1px; white-space: pre; overflow: hidden; }
</style>
